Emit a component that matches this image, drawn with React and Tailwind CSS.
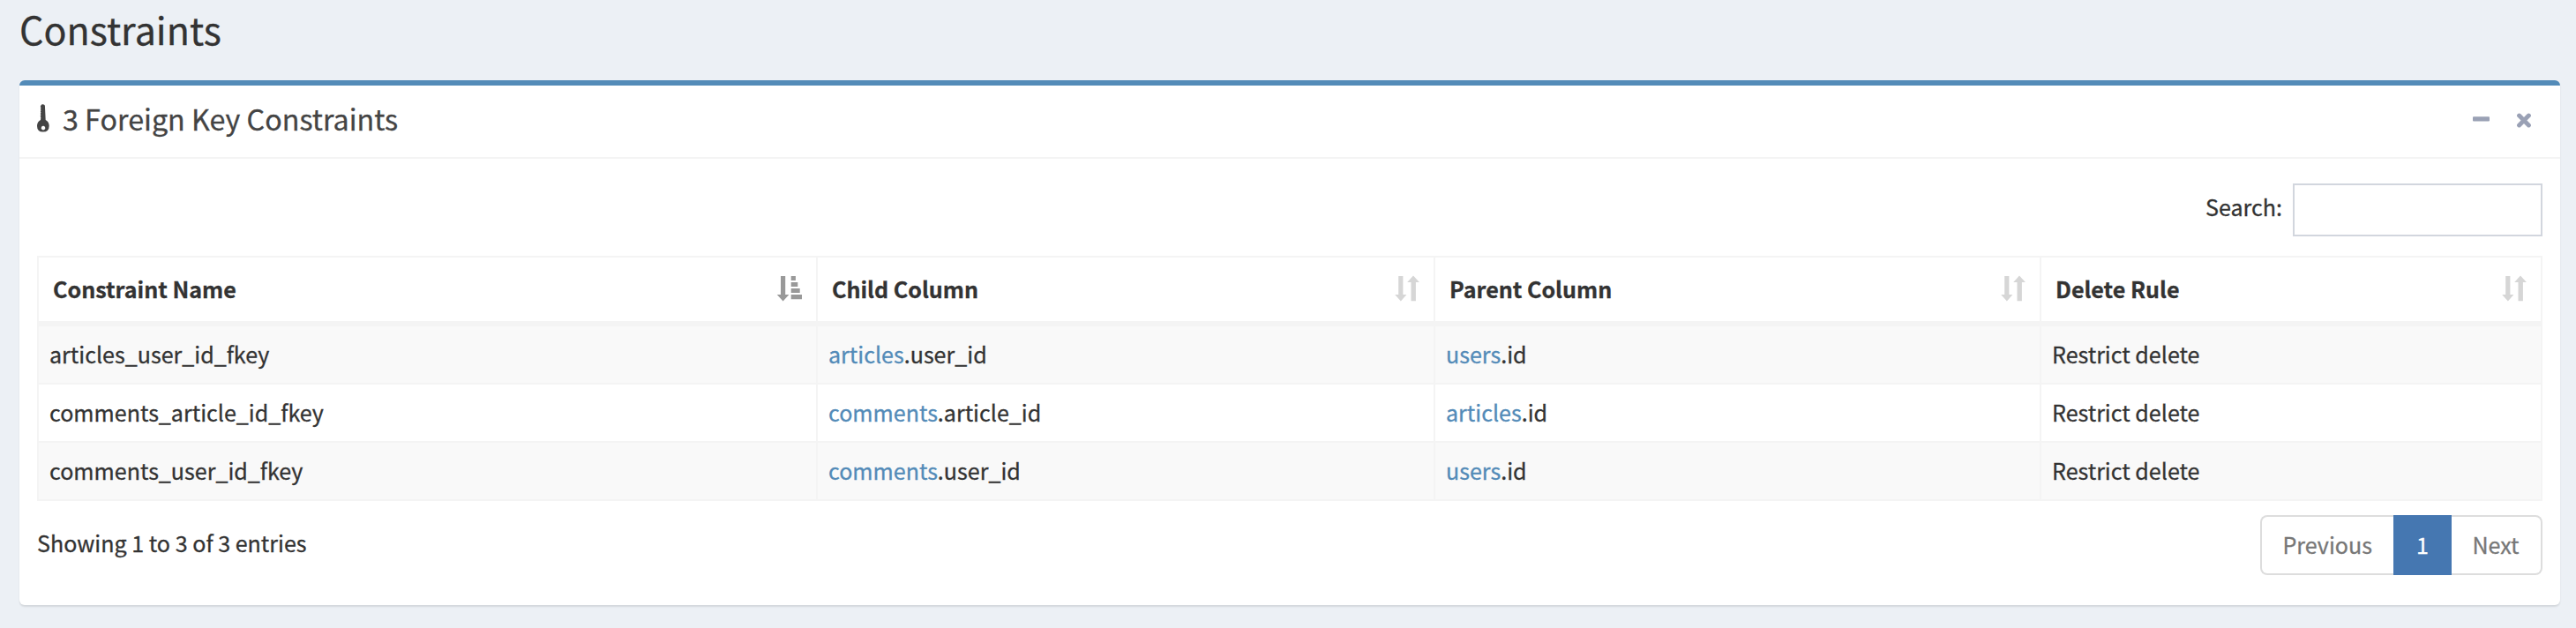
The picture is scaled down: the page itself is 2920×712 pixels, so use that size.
const columns = [
  { label: "Constraint Name", width: "w-[885px] border-l-2", sorted: true },
  { label: "Child Column", width: "w-[700px]" },
  { label: "Parent Column", width: "w-[687px]" },
  { label: "Delete Rule", width: "w-[568px]" },
];

const rows = [
  { name: "articles_user_id_fkey", child: ["articles", "user_id"], parent: ["users", "id"], rule: "Restrict delete" },
  { name: "comments_article_id_fkey", child: ["comments", "article_id"], parent: ["articles", "id"], rule: "Restrict delete" },
  { name: "comments_user_id_fkey", child: ["comments", "user_id"], parent: ["users", "id"], rule: "Restrict delete" },
];

function KeyIcon() {
  return (
    <svg className="mb-[7px] h-8 w-4" viewBox="0 0 16 32" fill="#444">
      <path
        fillRule="evenodd"
        d="M5.4 1.6 Q5.8 .3 7.6 .3 Q9.6 .3 9.9 1.8 L10.7 18 Q14.7 20.2 14.7 24.8 Q14.7 31.6 7.8 31.6 Q1 31.6 1 24.8 Q1 20.2 5 18 L5.3 15 L4.7 13.6 L5.4 12.4 L4.8 11 L5.4 9.8 L4.9 8.4 L5.4 7 L4.9 5.4 L5.5 4.4 L4.8 3 Z M8 24.8 a2.3 2.3 0 1 0 .01 0 Z"
      />
    </svg>
  );
}

function SortIcon({ sorted }) {
  return sorted ? (
    <svg className="h-7 w-7 overflow-visible" viewBox="0 0 28 28" fill="#999">
      <path d="M4 0h5.2v21h4.2L6.6 28.4-.2 21H4zM15.7 0h5.2v5h-5.2zM15.7 7h7.6v5h-7.6zM15.7 14h10v5h-10zM15.7 21h12.3v5.2h-12.3z" />
    </svg>
  ) : (
    <svg className="h-7 w-7 overflow-visible" viewBox="0 0 28 28" fill="#d6d6d6">
      <path d="M4.2 0h5.2v21h4L6.9 28.4.2 21h4zM21 -.4l6.9 7.4h-4v21.2h-5.4V7h-4.3z" />
    </svg>
  );
}

function Reference({ value }) {
  return (
    <>
      <a className="text-[#538bb8]">{value[0]}</a>.{value[1]}
    </>
  );
}

function Cell({ col, children }) {
  return <div className={`${columns[col].width} border-r-2 border-[#f4f4f4] pl-[12px]`}>{children}</div>;
}

export default function App() {
  return (
    <div className="h-[712px] w-[2920px] bg-[#ecf0f5] px-[22px] text-[25.07px] leading-[62px] text-[#333] [-webkit-text-stroke:0.3px] [font-family:'Noto_Sans_CJK_SC',sans-serif]">
      <h1 className="h-[91px] text-[43px] leading-[64px]">Constraints</h1>
      <section className="h-[595px] w-[2880px] rounded-md border-t-[6px] border-[#538bb8] bg-white shadow-[0_2px_2px_rgba(0,0,0,0.1)]">
        <header className="flex h-[83px] items-center border-b-2 border-[#f4f4f4] pr-[32.3px] pl-[19px] text-[#444]">
          <KeyIcon />
          <h2 className="mb-[7px] ml-[14px] flex-1 text-[32.25px]">3 Foreign Key Constraints</h2>
          <svg className="h-5 w-[68px]" viewBox="0 0 68 20" fill="none" stroke="#9aa1b5">
            <rect x="1" y="4.3" width="19" height="5.2" rx="1" fill="#9aa1b5" stroke="none" />
            <path d="M53.6 3.1l10.8 10.8M64.4 3.1L53.6 13.9" strokeWidth="5" strokeLinecap="round" />
          </svg>
        </header>
        <div className="px-5 pt-7">
          <label className="flex h-[60px] justify-end gap-3">
            <span className="leading-[52px]">Search:</span>
            <input className="h-[60px] w-[283px] border-2 border-[#d2d6de] bg-white" />
          </label>
          <div className="mt-[22px] border-t-2 border-[#f4f4f4]">
            <div className="flex h-[78px] border-b-[6px] border-[#f4f4f4] font-bold">
              {columns.map((c) => (
                <div
                  key={c.label}
                  className={`${c.width} flex justify-between border-r-2 border-[#f4f4f4] pt-[21px] pr-4 pl-4`}
                >
                  <span className="leading-[28px]">{c.label}</span>
                  <SortIcon sorted={c.sorted} />
                </div>
              ))}
            </div>
            {rows.map((r) => (
              <div key={r.name} className="flex h-[66px] border-b-2 border-[#f4f4f4] odd:bg-white even:bg-[#f9f9f9]">
                <Cell col={0}>{r.name}</Cell>
                <Cell col={1}>
                  <Reference value={r.child} />
                </Cell>
                <Cell col={2}>
                  <Reference value={r.parent} />
                </Cell>
                <Cell col={3}>{r.rule}</Cell>
              </div>
            ))}
          </div>
          <footer className="mt-4 flex h-[68px] justify-between">
            <span>Showing 1 to 3 of 3 entries</span>
            <nav className="flex text-[#777]">
              <a className="w-[151px] rounded-l-lg border-2 border-r-0 border-[#ddd] pl-[23.5px]">Previous</a>
              <a className="w-[66px] bg-[#4577b1] text-center leading-[66px] text-white">1</a>
              <a className="w-[103px] rounded-r-lg border-2 border-l-0 border-[#ddd] pl-[23.5px]">Next</a>
            </nav>
          </footer>
        </div>
      </section>
    </div>
  );
}
